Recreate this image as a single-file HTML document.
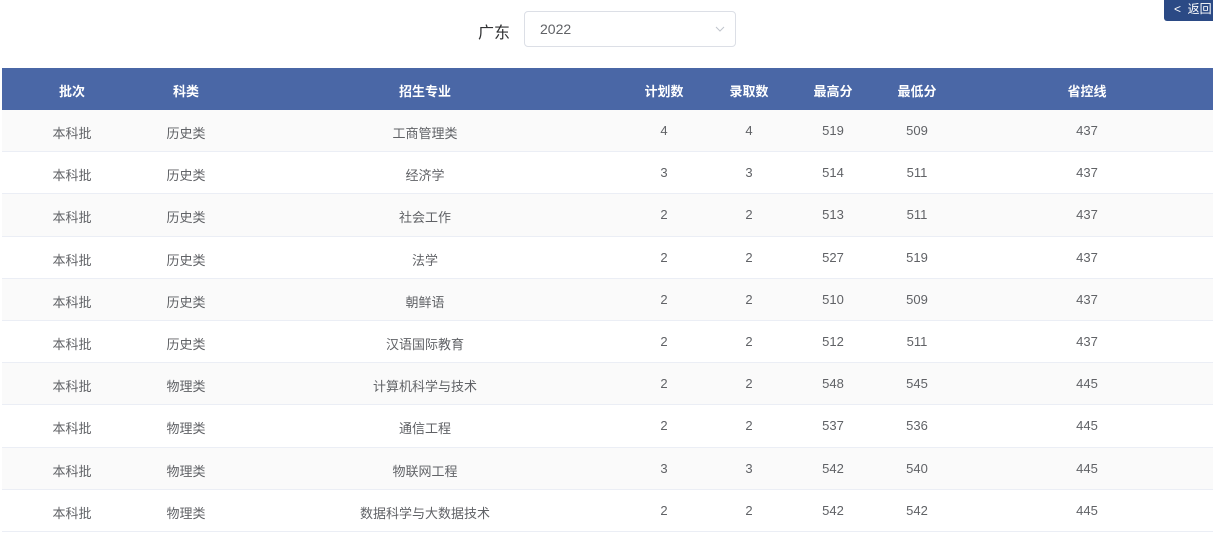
<!DOCTYPE html>
<html><head><meta charset="utf-8"><style>
body{margin:0;width:1213px;height:542px;background:#fff;font-family:"Liberation Sans","Noto Sans CJK SC",sans-serif;position:relative;overflow:hidden}
.lbl{position:absolute;left:478px;top:19px;font-size:16px;color:#303133}
.sel{position:absolute;left:524px;top:11px;width:212px;height:36px;border:1px solid #dcdfe6;border-radius:4px;box-sizing:border-box}
.sel span{position:absolute;left:15px;top:9px;font-size:14px;color:#606266}
.sel svg{position:absolute;right:10px;top:14px}
.btn{position:absolute;left:1164px;top:-4px;width:60px;height:25px;background:#2b4a85;border-radius:3px;color:#fff;font-size:12px}
.btn span{position:absolute;left:10px;top:4px}
.tbl{position:absolute;left:2px;top:68px;width:1211px}
.hd{height:42px;background:#4a67a6;position:relative;color:#fff;font-weight:bold;font-size:13px}
.r{height:41.2px;border-bottom:1px solid #ebeef5;position:relative;font-size:13px;color:#606266}
.r:nth-child(odd){background:#fafafa}
.c{position:absolute;width:200px;text-align:center;top:13px}
</style></head><body>
<div class="lbl">广东</div>
<div class="sel"><span>2022</span><svg width="10" height="6" viewBox="0 0 10 6"><path d="M1 1L5 5L9 1" fill="none" stroke="#c0c4cc" stroke-width="1"/></svg></div>
<div class="btn"><span>&lt;&nbsp;&nbsp;返回</span></div>
<div class="tbl">
<div class="hd"><div class="c" style="left:-30px">批次</div><div class="c" style="left:84px">科类</div><div class="c" style="left:323px">招生专业</div><div class="c" style="left:562px">计划数</div><div class="c" style="left:647px">录取数</div><div class="c" style="left:731px">最高分</div><div class="c" style="left:815px">最低分</div><div class="c" style="left:985px">省控线</div></div>
<div id="rows"></div>
</div>
<script>
var d=[["历史类","工商管理类",4,4,519,509,437],["历史类","经济学",3,3,514,511,437],["历史类","社会工作",2,2,513,511,437],["历史类","法学",2,2,527,519,437],["历史类","朝鲜语",2,2,510,509,437],["历史类","汉语国际教育",2,2,512,511,437],["物理类","计算机科学与技术",2,2,548,545,445],["物理类","通信工程",2,2,537,536,445],["物理类","物联网工程",3,3,542,540,445],["物理类","数据科学与大数据技术",2,2,542,542,445]];
var L=[-30,84,323,562,647,731,815,985],h="";
d.forEach(function(r){var v=["本科批"].concat(r);h+='<div class="r">';v.forEach(function(x,i){h+='<div class="c" style="left:'+L[i]+'px">'+x+'</div>'});h+='</div>'});
document.getElementById("rows").innerHTML=h;
</script>
</body></html>
